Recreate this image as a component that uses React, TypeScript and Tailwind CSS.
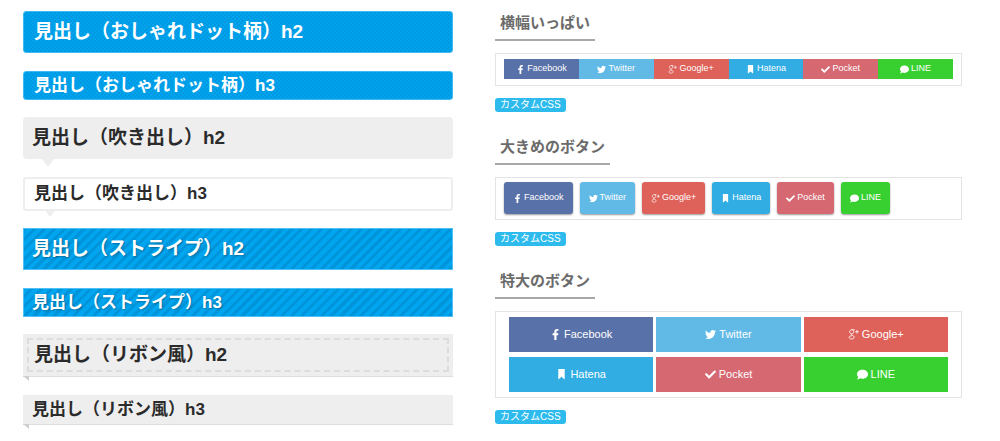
import React from "react";
import clsx from "clsx";
import { FaCheck, FaComment, FaFacebookF, FaTwitter } from "react-icons/fa";

type IconProps = { className?: string };

const GoogleIcon = ({ className }: IconProps) => (
	<svg
		viewBox="0 0 24 24"
		className={className}
		fill="none"
		stroke="currentColor"
		strokeWidth={1.8}
	>
		<path d="M14.5 1.500H8.500C5.500 1.500 3.600 3.500 3.600 6s1.900 4.500 4.500 4.500 4.300-1.900 4.300-4.400-1.400-4.600-3.900-4.600" />
		<path d="M8.500 10.500c-1.500 1.500-.8 2.400 1 3.300 2.500 1.200 4 2.100 4 4.200 0 2.300-2.300 3.800-5.600 3.800s-5.400-1.400-5.400-3.500c0-2.300 2.500-3.600 6.500-3.600" />
		<path d="M19.500 2v8M15.500 6h8" />
	</svg>
);

const BookmarkIcon = ({ className }: IconProps) => (
	<svg viewBox="0 0 24 24" className={className} fill="currentColor">
		<path d="M5 0h14v23l-7-6-7 6z" />
	</svg>
);

const shares = [
	{ name: "Facebook", Icon: FaFacebookF, color: "bg-[#5971a9]" },
	{ name: "Twitter", Icon: FaTwitter, color: "bg-[#61b9e6]" },
	{ name: "Google+", Icon: GoogleIcon, color: "bg-[#de6259]" },
	{ name: "Hatena", Icon: BookmarkIcon, color: "bg-[#31ade3]" },
	{ name: "Pocket", Icon: FaCheck, color: "bg-[#d66872]" },
	{ name: "LINE", Icon: FaComment, color: "bg-[#38d030]" },
];

const dots =
	"rounded-[3px] border border-[#3cb8f2] bg-[repeating-conic-gradient(#009ae2_0_25%,#00a4ee_0_50%)] bg-[length:4px_4px] text-white";
const stripes =
	"border border-[#4fc0f5] bg-[repeating-linear-gradient(-45deg,#0095da_0_3px,#00a5ef_3px_7px)] text-white [text-shadow:1px_1px_2px_rgba(0,0,0,0.3)]";
const fold =
	"before:absolute before:top-full before:left-0 before:border-t-[5px] before:border-l-[6px] before:border-t-[#cfcfcf] before:border-l-transparent";
const bubble =
	"before:absolute before:top-full before:left-[19px] before:border-x-[6px] before:border-t-[8px] before:border-x-transparent before:border-t-[#eee]";

type HeadingProps = {
	level: 2 | 3;
	className?: string;
	children: React.ReactNode;
};

const Heading = ({ level, className, children }: HeadingProps) => {
	const Tag = level === 2 ? "h2" : "h3";
	return (
		<Tag
			className={clsx(
				"relative flex items-center font-bold whitespace-nowrap",
				level === 2 ? "text-[19px]" : "text-[17px]",
				className
			)}
		>
			{children}
		</Tag>
	);
};

type ShareProps = {
	share: (typeof shares)[number];
	className?: string;
	large?: boolean;
};

const ShareLink = ({ share, className, large }: ShareProps) => {
	const { name, Icon, color } = share;
	return (
		<a
			href="#"
			className={clsx(
				"flex items-center justify-center text-white",
				large ? "gap-[3px] text-[11px]" : "gap-[2px] text-[9px]",
				color,
				className
			)}
		>
			<Icon className={large ? "size-[11px]" : "size-[9px]"} />
			{name}
		</a>
	);
};

type SectionProps = { title: string; children: React.ReactNode };

const ShareSection = ({ title, children }: SectionProps) => (
	<section className="flex flex-col items-start gap-3">
		<h2 className="border-b-2 border-[#a8a8a8] px-[5px] pb-1 text-[15px] leading-6 font-bold text-[#6b6b6b]">
			{title}
		</h2>
		<div className="w-full border border-[#e4e4e4] px-2">{children}</div>
		<span className="rounded-[3px] bg-[#2dbbee] px-[5px] text-[10px] leading-[14px] text-white">
			カスタムCSS
		</span>
	</section>
);

const App = () => {
	return (
		<main className="grid grid-cols-[430fr_467fr] gap-x-[42px] bg-white pt-[11px] pr-[38px] pb-4 pl-[23px] font-['Liberation_Sans','Noto_Sans_CJK_JP',sans-serif] text-[#2b2b2b]">
			<div className="flex flex-col gap-[17px]">
				<div className="flex flex-col gap-[18px]">
					<Heading level={2} className={clsx("h-[42px] px-[10px]", dots)}>
						見出し（おしゃれドット柄）h2
					</Heading>
					<Heading level={3} className={clsx("h-[29px] px-[10px]", dots)}>
						見出し（おしゃれドット柄）h3
					</Heading>
				</div>
				<div className="flex flex-col gap-[18px]">
					<Heading
						level={2}
						className={clsx("h-[42px] rounded-[4px] bg-[#eee] px-[9px]", bubble)}
					>
						見出し（吹き出し）h2
					</Heading>
					<Heading
						level={3}
						className={clsx(
							"h-[34px] rounded-[3px] border-2 border-[#eee] px-[9px]",
							bubble
						)}
					>
						見出し（吹き出し）h3
					</Heading>
				</div>
				<div className="flex flex-col gap-[18px]">
					<Heading level={2} className={clsx("h-[42px] px-[8px]", stripes)}>
						見出し（ストライプ）h2
					</Heading>
					<Heading level={3} className={clsx("h-[29px] px-[8px]", stripes)}>
						見出し（ストライプ）h3
					</Heading>
				</div>
				<div className="flex flex-col gap-[18px]">
					<Heading
						level={2}
						className={clsx("h-[43px] border-b border-[#dedede] bg-[#eee] p-1", fold)}
					>
						<span className="flex h-full w-full items-center border-2 border-dashed border-[#dcdcdc] px-[5px]">
							見出し（リボン風）h2
						</span>
					</Heading>
					<Heading
						level={3}
						className={clsx("h-[30px] border-b border-[#dedede] bg-[#eee] px-[9px]", fold)}
					>
						見出し（リボン風）h3
					</Heading>
				</div>
			</div>

			<div className="flex flex-col gap-[23px]">
				<ShareSection title="横幅いっぱい">
					<div className="grid grid-cols-6 pt-[5px] pb-[6px]">
						{shares.map((share) => (
							<ShareLink key={share.name} share={share} className="h-5" />
						))}
					</div>
				</ShareSection>
				<ShareSection title="大きめのボタン">
					<div className="flex gap-[7px] pt-1 pb-[5px]">
						{shares.map((share) => (
							<ShareLink
								key={share.name}
								share={share}
								className="h-8 rounded-[3px] px-[9px] shadow-[0_1px_2px_rgba(0,0,0,0.4)]"
							/>
						))}
					</div>
				</ShareSection>
				<ShareSection title="特大のボタン">
					<div className="grid grid-cols-3 gap-x-[3px] gap-y-[5px] px-[5px] py-[5px]">
						{shares.map((share) => (
							<ShareLink
								key={share.name}
								share={share}
								large
								className="h-[35px]"
							/>
						))}
					</div>
				</ShareSection>
			</div>
		</main>
	);
};

export default App;
